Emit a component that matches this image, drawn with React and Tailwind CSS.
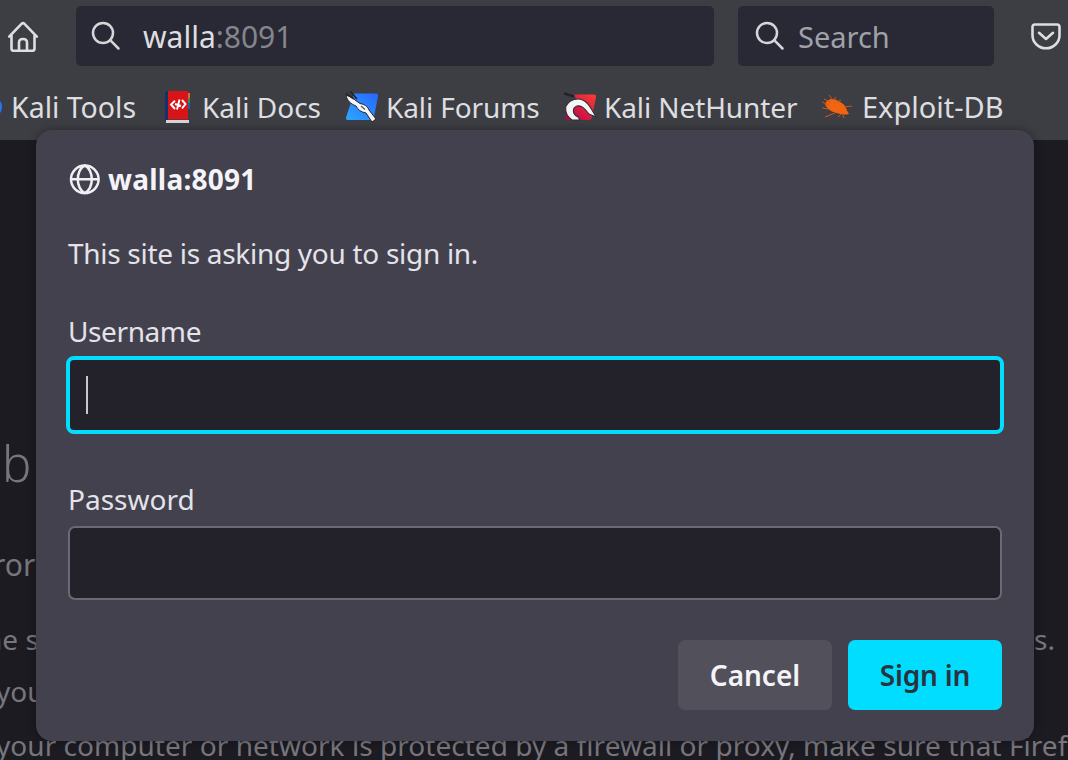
const SearchIcon = () => (
  <svg className="h-[30px] w-[30px] shrink-0" viewBox="0 0 30 30" fill="none" stroke="#d6d6d9" strokeWidth="2.5" strokeLinecap="round">
    <circle cx="12" cy="12" r="10" />
    <path d="M19.2 19.2 27.500 27.5" />
  </svg>
);

const HomeIcon = () => (
  <svg className="h-8 w-8 shrink-0" viewBox="0 0 32 32" fill="none" stroke="#dedee0" strokeWidth="2.600" strokeLinecap="round" strokeLinejoin="round">
    <path d="M2.2 16.600 14.500 3.800q1.500-1.500 3 0l12.300 12.800M4.500 15.500V28.500q0 2.300 2.300 2.300h18.400q2.300 0 2.300-2.300V15.500" />
    <path d="M12 30v-7.500q0-3.500 4-3.500t4 3.500V30" />
  </svg>
);

const PocketIcon = () => (
  <svg className="h-7 w-[30px] shrink-0" viewBox="0 0 30 28" fill="none" stroke="#dedee0" strokeWidth="2.600" strokeLinecap="round" strokeLinejoin="round">
    <path d="M4 2.500h22q2.500 0 2.500 2.500v8.300a13.500 13 0 0 1-27 0V5Q1.500 2.500 4 2.500Z" />
    <path d="m8 10.800 7 6.200 7-6.200" />
  </svg>
);

const DocsIcon = () => (
  <svg className="h-8 w-[26px] shrink-0" viewBox="0 0 26 32">
    <path d="M0 2Q0 0 3 0v30H0Z" fill="#15306b" />
    <path d="M3 0h20v28.500H3Z" fill="#d71518" />
    <path d="M23 2h2v5h-2Z" fill="#e56b24" />
    <path d="M23 7h2v5h-2Z" fill="#398b54" />
    <path d="M23 12h2v6h-2Z" fill="#1c5bad" />
    <path d="M1 29h23v3H1Z" fill="#d9d4d8" />
    <path d="m10 9.800-4 3.700 4 4.500M17 9l3.500 4-3.500 4.500M10 13l6 2M14.500 8.500 12 18.500" fill="none" stroke="#fff" strokeWidth="1.900" />
  </svg>
);

const ForumsIcon = () => (
  <svg className="h-8 w-[34px] shrink-0" viewBox="0 0 34 32">
    <defs>
      <linearGradient id="forum" x1="1" y1="0" x2="0" y2="1">
        <stop offset="0" stopColor="#2667ff" />
        <stop offset="1" stopColor="#2ca7ff" />
      </linearGradient>
    </defs>
    <path d="M9 2.500h22q2.500 0 2 2.500l-4 21q-.6 3-3 3H3q-2.500 0-2-2.500Z" fill="url(#forum)" />
    <path d="M1 4 8 7 10 9l5 3.500c6 1 8 4 9 6.500l7 9-4 3-6-9c-5-1-8-3-10-7C6 13 2 10 1 4Z" fill="#f4f4f4" stroke="#24262c" strokeWidth="1" strokeLinejoin="round" />
    <path d="M1 2.500 9 8M5 0l7 8" fill="none" stroke="#24262c" strokeWidth="1.700" />
    <path d="m16 15 4 3.500" fill="none" stroke="#55575e" strokeWidth="1.200" />
  </svg>
);

const NetHunterIcon = () => (
  <svg className="h-8 w-[34px] shrink-0" viewBox="0 0 34 32">
    <defs>
      <linearGradient id="hunter" x1="1" y1="0" x2="0" y2="1">
        <stop offset="0" stopColor="#ff3b32" />
        <stop offset="1" stopColor="#b80050" />
      </linearGradient>
    </defs>
    <path d="M10 3.500h20q2.400 0 2 2.500l-4 20q-.6 3-3 3H4q-3 0-2.500-3l1-5L15 13Z" fill="url(#hunter)" />
    <path d="M0 2.500 10 5.500" fill="none" stroke="#222328" strokeWidth="2.400" />
    <path d="M2 15Q6 8 14 8C22 8 26 15 32 26l-7-3c-4-5-7-9-12-8-5 2-5 8 1 11l2 3H8C2 25 1 20 2 15Z" fill="#f5f5f5" stroke="#303037" strokeWidth="1.100" strokeLinejoin="round" />
  </svg>
);

const ExploitIcon = () => (
  <svg className="h-6 w-8 shrink-0" viewBox="0 0 32 24">
    <path d="M4 9Q6 4 12 4C17 5 24 9 25 13q1 3 3 6-4 1-8 0C13 18 6 15 4 9Z" fill="#f36410" />
    <path d="m1 7 7 3M1 13l7 1M8 0l4 5M14 2v4M20 5l-4 2M31 11l-8 1M4 22l10-4M17 22l3-3M23 23l-2-5M3 4l6 3" stroke="#c9571c" strokeWidth="1" />
  </svg>
);

const GlobeIcon = () => (
  <svg className="h-8 w-8 shrink-0" viewBox="0 0 32 32" fill="none" stroke="#f0eff4" strokeWidth="2.500">
    <circle cx="16.800" cy="16.300" r="13.800" />
    <path d="M3 16.300h27.600M16.800 2.500c-4.500 2-7 8-7 13.800s2.500 11.800 7 13.800c4.500-2 7-8 7-13.800S21.300 4.500 16.800 2.500Z" />
  </svg>
);

export default function App() {
  return (
    <div className="relative h-[760px] w-[1068px] overflow-hidden whitespace-nowrap bg-[#1c1b22] font-['Noto_Sans',sans-serif] text-[28px] leading-[40px] text-[#dedee0]">
      <header className="h-[140px] bg-[#3d3e43]">
        <div className="flex h-[72px] items-center pl-[7px]">
          <HomeIcon />
          <div className="ml-[37px] flex h-[60px] w-[638px] items-center rounded-[5px] bg-[#282935] pl-[15px]">
            <SearchIcon />
            <span className="ml-[22px] pt-px text-[30px]">walla<span className="text-[#85858c]">:8091</span></span>
          </div>
          <div className="ml-6 flex h-[60px] w-[256px] items-center rounded-[5px] bg-[#282935] pl-[17px]">
            <SearchIcon />
            <span className="ml-[13px] pt-0.5 text-[29px] text-[#a1a1a8]">Search</span>
          </div>
          <div className="ml-[37px]"><PocketIcon /></div>
        </div>
        <nav className="flex h-[68px] items-center overflow-hidden pt-px">
          <span className="-ml-[20px] h-[22px] w-[22px] shrink-0 rounded-full bg-[#2476ff]" />
          <span className="ml-[9px] w-[154px] shrink-0 text-[28.500px]">Kali Tools</span>
          <DocsIcon />
          <span className="ml-[11px] w-[143px] shrink-0">Kali Docs</span>
          <ForumsIcon />
          <span className="ml-[7px] w-[178px] shrink-0 tracking-[-0.1px]">Kali Forums</span>
          <NetHunterIcon />
          <span className="ml-[6px] w-[217px] shrink-0 tracking-[-0.1px]">Kali NetHunter</span>
          <ExploitIcon />
          <span className="ml-[9px] text-[29px]">Exploit-DB</span>
        </nav>
      </header>

      <main className="flex h-[620px] flex-col overflow-hidden pt-[288px] text-[28px] text-[#77767c]">
        <div className="h-[70px] pl-[2px] text-[49px] font-light leading-[70px]">b</div>
        <div className="mt-[47px] -ml-[7px] text-[30px]">ror</div>
        <div className="mt-[34px] flex justify-between pr-[13px]">
          <span className="-ml-[15px]">he s</span>
          <span>s.</span>
        </div>
        <div className="mt-[12px] -ml-[4px]">you</div>
        <div className="mt-[14px] -ml-[4px] tracking-[0.04px]">your computer or network is protected by a firewall or proxy, make sure that Firef</div>
      </main>

      <section className="absolute left-9 top-[130px] flex h-[611px] w-[998px] flex-col rounded-2xl bg-[#42414d] px-8 pt-[29px] text-[#e4e3e9] shadow-[0_0_10px_rgba(0,0,0,0.35)]">
        <div className="flex items-center gap-2 font-bold tracking-[0.25px] text-[#f4f3f8]">
          <GlobeIcon />
          <span>walla:8091</span>
        </div>
        <p className="mt-[34px] tracking-[-0.29px]">This site is asking you to sign in.</p>
        <label className="mt-[38px] tracking-[-0.4px]">Username</label>
        <div className="-mx-0.5 mt-[5px] flex h-[78px] items-center rounded-[8px] border-4 border-[#00ddff] bg-[#23222b] pl-4">
          <span className="h-[38px] w-0.5 bg-[#c9c8cd]" />
        </div>
        <label className="mt-[45px]">Password</label>
        <div className="mt-[7px] h-[74px] shrink-0 rounded-[7px] border-2 border-[#6b6a73] bg-[#23222b]" />
        <div className="mt-10 flex justify-end gap-4 font-semibold">
          <button className="h-[70px] w-[154px] rounded-[7px] bg-[#52505b] text-[#f4f3f8]">Cancel</button>
          <button className="h-[70px] w-[154px] rounded-[7px] bg-[#00ddff] tracking-[-0.2px] text-[#2b3340]">Sign in</button>
        </div>
      </section>
    </div>
  );
}
